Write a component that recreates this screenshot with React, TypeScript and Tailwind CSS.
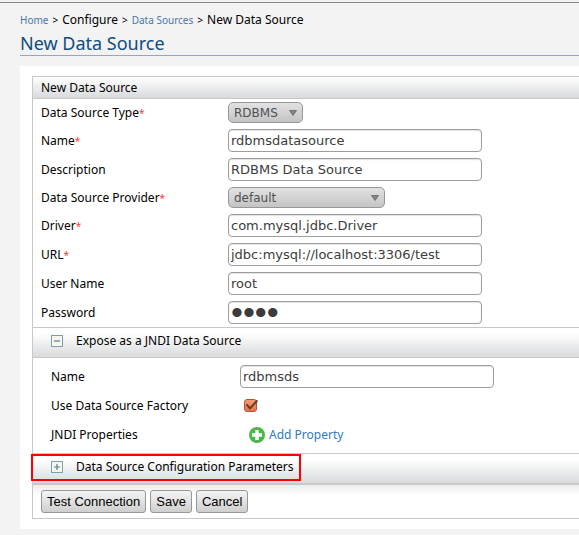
import React, { useId, useState } from "react";

const boxClass =
  "h-[23px] w-[254px] rounded border border-[#a09c98] bg-white px-[2px] text-[#3c3c3c] shadow-[inset_0_1px_1px_#e4e2e0] outline-none";
const inputFont = "font-['DejaVu_Sans',sans-serif] text-[13px] leading-[19px]";
const passwordFont = "font-['Liberation_Sans',Arial,sans-serif] text-[34px] leading-[21px]";

function Label({ htmlFor, text, required }: { htmlFor: string; text: string; required?: boolean }) {
  return (
    <label htmlFor={htmlFor} className="w-[187px] shrink-0 whitespace-nowrap">
      {text}
      {required && <span className="text-[10px] text-[#ff3b3b]">*</span>}
    </label>
  );
}

function TextRow({ label, value, required, type = "text" }: { label: string; value: string; required?: boolean; type?: string }) {
  const id = useId();
  return (
    <div className="flex h-[29px] items-center pl-2">
      <Label htmlFor={id} text={label} required={required} />
      <input
        id={id}
        type={type}
        defaultValue={value}
        className={`${boxClass} ${type === "password" ? passwordFont : inputFont}`}
      />
    </div>
  );
}

function SelectRow({ label, option, width }: { label: string; option: string; width: string }) {
  const id = useId();
  return (
    <div className="flex h-[27px] items-center pl-2">
      <Label htmlFor={id} text={label} required />
      <div className={`relative ${width}`}>
        <select
          id={id}
          className="block h-[21px] w-full appearance-none rounded-[5px] border border-[#979797] bg-linear-to-b from-[#e2e2e2] to-[#c4c4c4] pt-px pl-[5px] font-['DejaVu_Sans',sans-serif] text-[12px] leading-[18px] text-[#505050]"
        >
          <option>{option}</option>
        </select>
        <svg viewBox="0 0 8 6" className="pointer-events-none absolute top-[8px] right-[6px] h-[6px] w-[8px]" aria-hidden="true">
          <path d="M0.5 0.5h7L4 5.5z" fill="#858585" stroke="#666" strokeWidth="0.8" />
        </svg>
      </div>
    </div>
  );
}

function ToggleIcon({ open }: { open: boolean }) {
  return (
    <svg viewBox="0 0 12 12" className="size-3 shrink-0" aria-hidden="true">
      <rect x="0.5" y="0.5" width="11" height="11" fill="#f6f6ea" stroke="#7ba0ad" />
      <path d={open ? "M3 6h6" : "M3 6h6M6 3v6"} stroke="#4b8193" strokeWidth="1.2" />
    </svg>
  );
}

function SectionButton({ title, open, onClick }: { title: string; open: boolean; onClick: () => void }) {
  return (
    <button
      type="button"
      aria-expanded={open}
      onClick={onClick}
      className="flex h-[29px] w-full items-center gap-[13px] bg-linear-to-b from-white from-20% to-[#d8dadc] pb-1 pl-[18px] text-left"
    >
      <ToggleIcon open={open} />
      {title}
    </button>
  );
}

const actionClass =
  "h-[23px] rounded-[3px] border border-[#979797] bg-linear-to-b from-[#f4f4f4] to-[#cfcfcf] px-[5px] font-['Liberation_Sans',Arial,sans-serif] text-[13px] leading-[19px] text-black";

export default function App() {
  const [jndiOpen, setJndiOpen] = useState(true);
  const [paramsOpen, setParamsOpen] = useState(false);

  return (
    <div className="min-h-screen bg-[#f3f3f3] pt-[2px] font-['Noto_Sans',sans-serif] text-[12px] leading-4 text-black">
      <div className="border-t border-[#888]" />
      <main className="pt-[9px] pl-5">
        <nav aria-label="Breadcrumb" className="flex h-4 items-center gap-1 whitespace-nowrap">
          <a href="#home" className="text-[10px] text-[#4a76ac]">Home</a>
          <span className="text-[10px]">&gt;</span>
          <span>Configure</span>
          <span className="text-[10px]">&gt;</span>
          <a href="#sources" className="text-[10px] text-[#4a76ac]">Data Sources</a>
          <span className="text-[10px]">&gt;</span>
          <span>New Data Source</span>
        </nav>
        <h1 className="border-b border-[#9ba3c4] pt-[3px] text-[18px] leading-6 text-[#0d4d80]">New Data Source</h1>

        <div className="mt-[10px] bg-white pt-[10px] pb-[10px] pl-3">
          <form className="border-y border-l border-[#c8c8c8]" onSubmit={(e) => e.preventDefault()}>
            <h2 className="h-[22px] border-b border-[#c8c8c8] bg-linear-to-b from-white to-[#d8dadc] pl-2 leading-[22px]">
              New Data Source
            </h2>
            <SelectRow label="Data Source Type" option="RDBMS" width="w-[75px]" />
            <TextRow label="Name" value="rdbmsdatasource" required />
            <TextRow label="Description" value="RDBMS Data Source" />
            <SelectRow label="Data Source Provider" option="default" width="w-[157px]" />
            <TextRow label="Driver" value="com.mysql.jdbc.Driver" required />
            <TextRow label="URL" value="jdbc:mysql://localhost:3306/test" required />
            <TextRow label="User Name" value="root" />
            <TextRow label="Password" value="root" type="password" />

            <section className="border-t border-[#c8c8c8]">
              <SectionButton title="Expose as a JNDI Data Source" open={jndiOpen} onClick={() => setJndiOpen(!jndiOpen)} />
              {jndiOpen && (
                <div className="border-t border-[#c8c8c8] py-1 pl-[18px]">
                  <div className="flex h-[29px] items-center">
                    <label htmlFor="jndi-name" className="w-[189px] shrink-0">Name</label>
                    <input id="jndi-name" defaultValue="rdbmsds" className={`${boxClass} ${inputFont}`} />
                  </div>
                  <div className="flex h-[29px] items-center">
                    <label htmlFor="jndi-factory" className="w-[193px] shrink-0">Use Data Source Factory</label>
                    <div className="relative size-[14px]">
                      <input
                        id="jndi-factory"
                        type="checkbox"
                        defaultChecked
                        className="peer block size-[13px] appearance-none rounded-[3px] border border-[#a85a3a] bg-white checked:bg-linear-to-b checked:from-[#f79a70] checked:to-[#ee6f42]"
                      />
                      <svg viewBox="0 0 14 14" className="pointer-events-none absolute inset-0 hidden size-[14px] peer-checked:block" aria-hidden="true">
                        <path d="M2.6 5.4L6 9.4L13.4 1.4" fill="none" stroke="#5d3a2c" strokeWidth="1.9" />
                      </svg>
                    </div>
                  </div>
                  <div className="flex h-[29px] items-center">
                    <span className="w-[198px] shrink-0">JNDI Properties</span>
                    <a href="#add" className="flex items-center gap-1 text-[#2e7cc0]">
                      <svg viewBox="0 0 16 16" className="size-4" aria-hidden="true">
                        <circle cx="8" cy="8" r="8" fill="#4cb748" />
                        <path d="M8 3v10M3 8h10" stroke="#fff" strokeWidth="3.4" />
                      </svg>
                      Add Property
                    </a>
                  </div>
                </div>
              )}
            </section>

            <section className="relative border-y border-b-2 border-[#c8c8c8]">
              <SectionButton
                title="Data Source Configuration Parameters"
                open={paramsOpen}
                onClick={() => setParamsOpen(!paramsOpen)}
              />
              <div className="pointer-events-none absolute top-0 -left-[2px] h-[27px] w-[270px] border-2 border-[#f00]" />
            </section>

            <div className="flex gap-1 bg-linear-to-b from-[#ededed] to-white to-30% px-2 py-[5px]">
              <button type="button" className={actionClass}>Test Connection</button>
              <button type="submit" className={actionClass}>Save</button>
              <button type="button" className={actionClass}>Cancel</button>
            </div>
          </form>
        </div>
      </main>
    </div>
  );
}
